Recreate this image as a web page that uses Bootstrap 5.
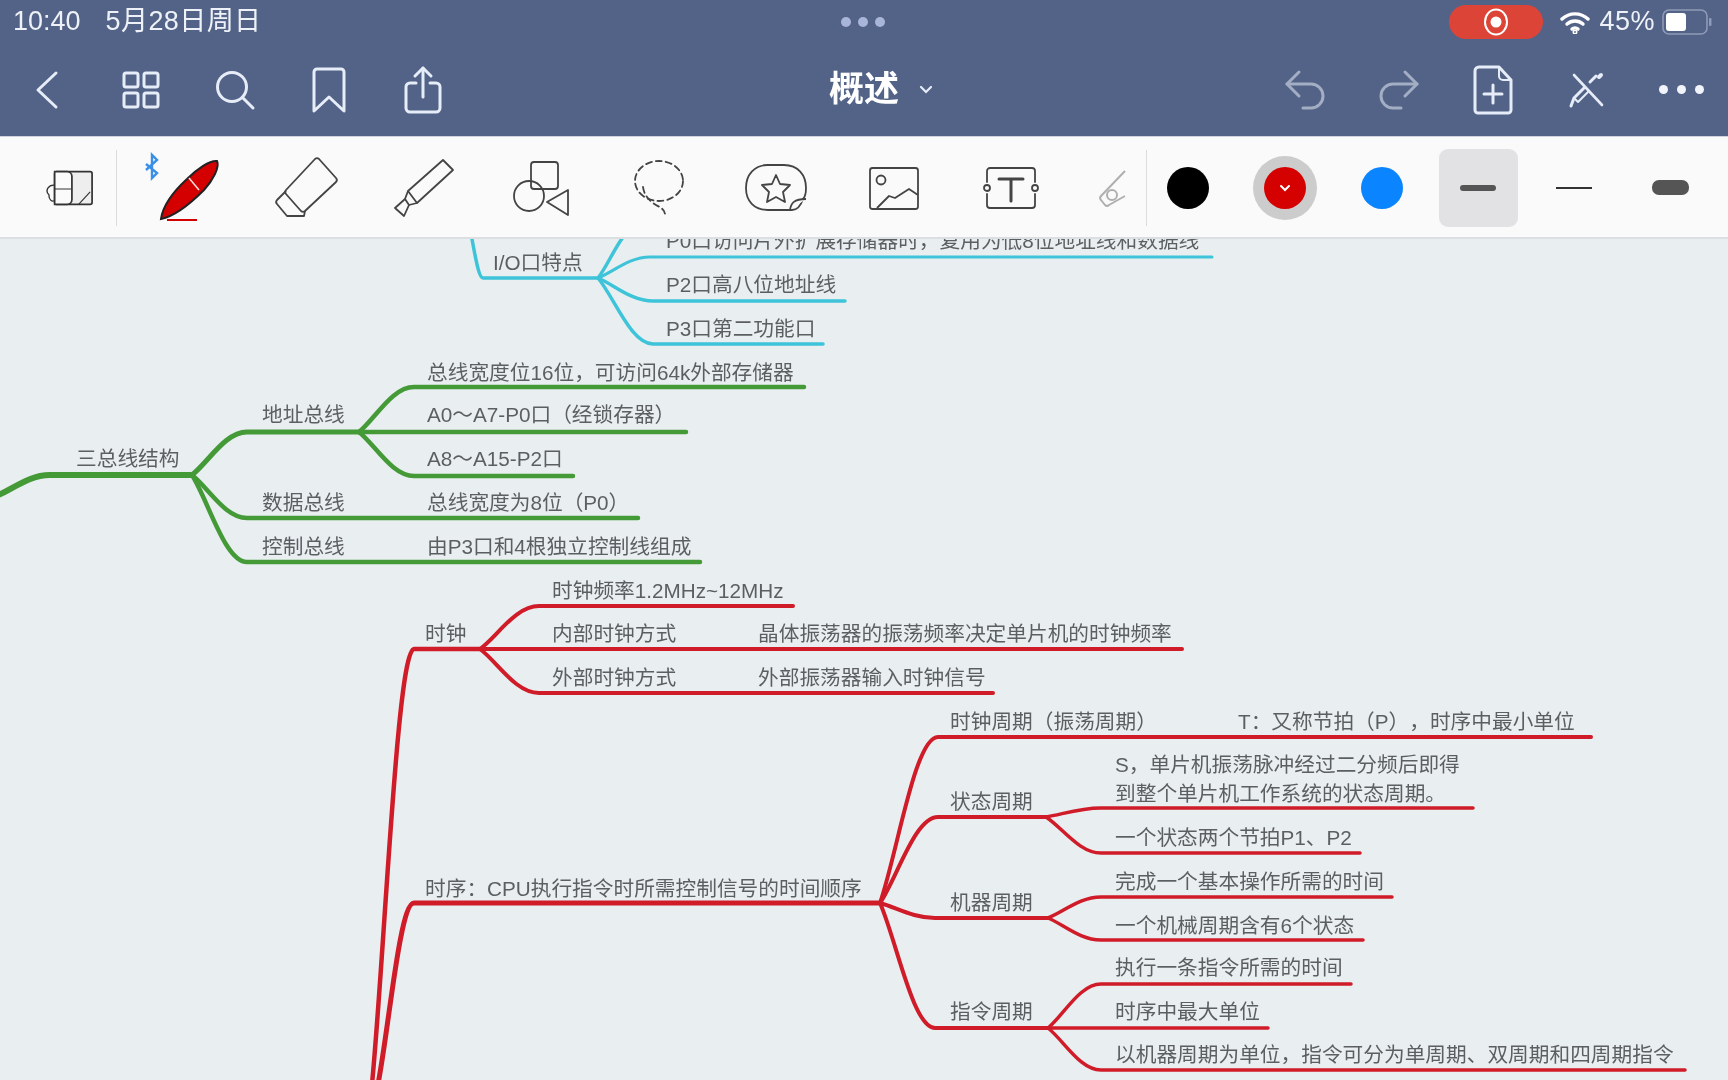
<!DOCTYPE html>
<html lang="zh-CN">
<head>
  <meta charset="UTF-8">
  <meta name="viewport" content="width=device-width, initial-scale=1.0">
  <title>概述</title>
  <link rel="stylesheet" href="https://cdn.jsdelivr.net/npm/bootstrap@5.3.3/dist/css/bootstrap.min.css">
  <style>
    html, body { height: 1080px; overflow: hidden; }
    body { font-family: "Liberation Sans", "Noto Sans CJK SC", sans-serif; background: #e9eef1; }
    .top-head { height: 136px; background: #536387; color: #eef2f8; filter: blur(.5px); }
    .status-row { height: 43px; padding-left: 13px; padding-right: 16px; font-size: 27px; }
    .status-date { margin-left: 25px; letter-spacing: .4px; }
    .status-dots { gap: 7px; margin-left: 580px; }
    .status-dots i { width: 10px; height: 10px; border-radius: 50%; background: #a9b6d9; display: block; }
    .rec-pill { width: 94px; height: 34px; border-radius: 17px; background: #dd4438; margin-right: 17px; }
    .pct { margin-left: 9px; margin-right: 7px; letter-spacing: .5px; }
    .nav-row { height: 93px; }
    .nav-btn { width: 94px; height: 93px; }
    .nav-btn svg, .tool-box svg { fill: none; overflow: visible; }
    .ico { stroke: #e6edf8; stroke-width: 3; stroke-linecap: round; stroke-linejoin: round; }
    .ico-dim { stroke: #a3adc4; }
    .doc-title { font-size: 35px; font-weight: 700; color: #fff; padding-left: 34px; gap: 20px; }
    .more-dots { gap: 9px; }
    .more-dots i { width: 9px; height: 9px; border-radius: 50%; background: #f1f4fa; display: block; }

    .tool-bar { height: 103px; padding-top: 1px; background: #fafafa; border-top: 1px solid #cfd2dc; border-bottom: 2px solid #dcdfe2; filter: blur(.4px); }
    .first-tool { width: 116px; padding-left: 24px; }
    .tool-sep { width: 1px; height: 76px; background: #dcdcdc; }
    .tool-list { width: 1000px; margin-left: 13px; }
    .tool-box { width: 117.5px; height: 96px; }
    .tool-box.tag-cut { width: 56px; justify-content: flex-end !important; opacity: .45; }
    .swatch-box { width: 97px; height: 96px; }
    .swatch-row { margin-left: -8px; margin-right: 10px; }
    .swatch { width: 42px; height: 42px; border-radius: 50%; }
    .swatch-ring { width: 64px; height: 64px; border-radius: 50%; background: #cccccd; }
    .swatch-black { background: #000; }
    .swatch-red { background: #d50000; }
    .swatch-blue { background: #0a84ff; }
    .width-box { width: 96px; height: 96px; }
    .width-on { width: 79px; height: 78px; background: #e2e2e4; border-radius: 9px; }
    .w-mid { width: 36px; height: 6px; border-radius: 3px; background: #555; }
    .w-thin { width: 36px; height: 2px; background: #333; }
    .w-thick { width: 37px; height: 15px; border-radius: 7px; background: #555; }

    .map-canvas { height: 841px; background: #e9eef1; overflow: hidden; filter: blur(.6px); }
    .map-canvas svg { display: block; }
    .map-label { position: absolute; transform: translateY(-50%); white-space: nowrap; color: #5c5f62; font-size: 20.7px; line-height: 1; }
  </style>
</head>
<body>
  <div class="top-head">
    <div class="status-row d-flex align-items-center">
      <span>10:40</span>
      <span class="status-date">5月28日周日</span>
      <div class="status-dots d-flex"><i></i><i></i><i></i></div>
      <div class="rec-pill d-flex align-items-center justify-content-center ms-auto">
        <svg width="26" height="28" viewBox="0 0 26 28"><ellipse cx="13" cy="14" rx="11" ry="12.5" fill="none" stroke="#fff" stroke-width="2"/><circle cx="13" cy="14" r="5.5" fill="#fff"/></svg>
      </div>
      <svg width="30" height="24" viewBox="0 0 30 24" fill="none" stroke="#fff" stroke-width="3.4" stroke-linecap="round"><path d="M2 9a19 19 0 0 1 26 0"/><path d="M7 14a12 12 0 0 1 16 0"/><path d="M12 19a4.5 4.5 0 0 1 6 0"/><circle cx="15" cy="22" r=".8"/></svg>
      <span class="pct">45%</span>
      <svg width="50" height="26" viewBox="0 0 50 26"><rect x="1" y="1" width="44" height="24" rx="6" fill="none" stroke="#8e9ab6" stroke-width="1.6"/><rect x="4" y="4" width="20" height="18" rx="3" fill="#fff"/><rect x="47" y="9" width="2.5" height="8" rx="1" fill="#8e9ab6"/></svg>
    </div>
    <div class="nav-row d-flex align-items-center">
      <div class="d-flex">
        <div class="nav-btn d-flex align-items-center justify-content-center">
          <svg class="ico" width="24" height="40" viewBox="0 0 24 40"><path d="M21 3 3 20l18 17"/></svg>
        </div>
        <div class="nav-btn d-flex align-items-center justify-content-center">
          <svg class="ico" width="38" height="38" viewBox="0 0 38 38"><rect x="2" y="2" width="14" height="14" rx="2"/><rect x="22" y="2" width="14" height="14" rx="2"/><rect x="2" y="22" width="14" height="14" rx="2"/><rect x="22" y="22" width="14" height="14" rx="2"/></svg>
        </div>
        <div class="nav-btn d-flex align-items-center justify-content-center">
          <svg class="ico" width="40" height="40" viewBox="0 0 40 40"><circle cx="17" cy="17" r="14.5"/><path d="M27.5 27.5 38 38"/></svg>
        </div>
        <div class="nav-btn d-flex align-items-center justify-content-center">
          <svg class="ico" width="34" height="46" viewBox="0 0 34 46"><path d="M2 44V5a3 3 0 0 1 3-3h24a3 3 0 0 1 3 3v39L17 30z"/></svg>
        </div>
        <div class="nav-btn d-flex align-items-center justify-content-center">
          <svg class="ico" width="38" height="48" viewBox="0 0 38 48"><path d="M12 17H6a4 4 0 0 0-4 4v21a4 4 0 0 0 4 4h26a4 4 0 0 0 4-4V21a4 4 0 0 0-4-4h-6"/><path d="M19 31V2"/><path d="M11 10l8-8 8 8"/></svg>
        </div>
      </div>
      <div class="flex-fill d-flex justify-content-center">
        <div class="doc-title d-flex align-items-center">
          <span>概述</span>
          <svg width="14" height="9" viewBox="0 0 14 9" fill="none" stroke="#e6edf8" stroke-width="2.2" stroke-linecap="round"><path d="M2 2l5 5 5-5"/></svg>
        </div>
      </div>
      <div class="d-flex">
        <div class="nav-btn d-flex align-items-center justify-content-center">
          <svg class="ico ico-dim" width="42" height="42" viewBox="0 0 42 42"><path d="M15 3 3 15l12 12"/><path d="M3 15h24a12 12 0 0 1 0 24h-8"/></svg>
        </div>
        <div class="nav-btn d-flex align-items-center justify-content-center">
          <svg class="ico ico-dim" width="42" height="42" viewBox="0 0 42 42"><path d="M27 3l12 12-12 12"/><path d="M39 15H15a12 12 0 0 0 0 24h8"/></svg>
        </div>
        <div class="nav-btn d-flex align-items-center justify-content-center">
          <svg class="ico" width="40" height="50" viewBox="0 0 40 50"><path d="M6 2h20l12 13v30a3 3 0 0 1-3 3H5a3 3 0 0 1-3-3V6a4 4 0 0 1 4-4z"/><path d="M26 2v9a4 4 0 0 0 4 4h8" stroke-width="2"/><path d="M20 20v18M11 29h18"/></svg>
        </div>
        <div class="nav-btn d-flex align-items-center justify-content-center">
          <svg class="ico" width="36" height="36" viewBox="0 0 36 36"><path d="M5 3l28 30" stroke-width="2.6"/><path d="M2 34l3-8L15 16M21 10l6-6" stroke-width="3"/><path d="M5 26l4 4L20 19" stroke-width="2"/><path d="M30 5l2-2" stroke-width="4"/></svg>
        </div>
        <div class="nav-btn d-flex align-items-center justify-content-center">
          <div class="more-dots d-flex"><i></i><i></i><i></i></div>
        </div>
      </div>
    </div>
  </div>

  <div class="tool-bar d-flex align-items-center">
    <div class="first-tool d-flex justify-content-center">
      <svg width="48" height="38" viewBox="0 0 50 38" fill="none" stroke="#333" stroke-width="1.8"><rect x="9" y="2" width="39" height="34" rx="2" fill="#eee"/><path d="M9 2h13a5 5 0 0 1 5 5v24a5 5 0 0 1-5 5H9z" fill="#fbfbfb"/><path d="M9 20h17M34 36l12-13" stroke-width="1.2"/><path d="M9 16a7 6 0 0 0-6 10c0 5 3 8 6 6" stroke-width="1.4"/></svg>
    </div>
    <div class="tool-sep"></div>
    <div class="tool-list d-flex align-items-center">
      <div class="tool-box d-flex align-items-center justify-content-center">
        <svg width="64" height="68" viewBox="0 0 64 68">
          <path d="M-11 10l11 9-5 5V1l5 5-11 10" stroke="#3a90e8" stroke-width="2.4"/>
          <path d="M4 65C6 50 17 37 30 25 40 15 53 6 60 7c3 6-4 19-13 29C35 48 19 62 4 65z" fill="#d40000" stroke="#222" stroke-width="2"/>
          <path d="M32 24l10 12" stroke="#f4dcdc" stroke-width="1.6"/>
          <path d="M10 66h30" stroke="#d40000" stroke-width="2"/>
        </svg>
      </div>
      <div class="tool-box d-flex align-items-center justify-content-center">
        <svg width="64" height="62" viewBox="0 0 64 62" stroke="#444" stroke-width="1.8" stroke-linejoin="round"><path d="M41 2a3 3 0 0 1 4 0l17 19a3 3 0 0 1 0 4L31 54a3 3 0 0 1-4 0L12 37a3 3 0 0 1 0-4z"/><path d="M12 34 3 43a3 3 0 0 0 0 4l10 12h17l1-5"/></svg>
      </div>
      <div class="tool-box d-flex align-items-center justify-content-center">
        <svg width="62" height="60" viewBox="0 0 62 60" stroke="#444" stroke-width="1.8" stroke-linejoin="round"><path d="M50 2l10 10-36 33-9-12z"/><path d="M15 33l-3 8 4 6 8-2"/><path d="M12 41 2 50l9 8 5-11"/></svg>
      </div>
      <div class="tool-box d-flex align-items-center justify-content-center">
        <svg width="58" height="58" viewBox="0 0 58 58" stroke="#444" stroke-width="1.8" stroke-linejoin="round"><rect x="19" y="3" width="27" height="27" rx="3"/><circle cx="17" cy="37" r="15"/><path d="M56 31 35 43l21 13z"/></svg>
      </div>
      <div class="tool-box d-flex align-items-center justify-content-center">
        <svg width="52" height="58" viewBox="0 0 52 58" stroke="#444" stroke-width="1.8" stroke-linecap="round" stroke-dasharray="6 4"><ellipse cx="26" cy="22" rx="24" ry="20"/><path d="M10 28c2 14 14 18 18 21 3 2 4 4 4 7"/></svg>
      </div>
      <div class="tool-box d-flex align-items-center justify-content-center">
        <svg width="64" height="50" viewBox="0 0 64 50" stroke="#444" stroke-width="1.8" stroke-linejoin="round"><path d="M46 47H24C10 47 2 38 2 25S10 2 24 2h16c14 0 22 10 22 23 0 5-1 9-3 11-2 6-6 11-11 11z"/><path d="M46 47c1-7 4-11 16-11" fill="#fafafa"/><path d="M32 12l4 9 10 1-7 7 2 10-9-5-9 5 2-10-7-7 10-1z"/></svg>
      </div>
      <div class="tool-box d-flex align-items-center justify-content-center">
        <svg width="52" height="44" viewBox="0 0 52 44" stroke="#444" stroke-width="1.8" stroke-linejoin="round"><rect x="2" y="2" width="48" height="41" rx="2.5"/><circle cx="13" cy="14" r="4.5"/><path d="M9 42l12-12 6 2 14-9 9 6"/></svg>
      </div>
      <div class="tool-box d-flex align-items-center justify-content-center">
        <svg width="56" height="44" viewBox="0 0 56 44" stroke="#444" stroke-width="1.8" stroke-linecap="round"><path d="M4 16V5a3 3 0 0 1 3-3h42a3 3 0 0 1 3 3v11M4 28v11a3 3 0 0 0 3 3h42a3 3 0 0 0 3-3V28"/><circle cx="4" cy="22" r="3"/><circle cx="52" cy="22" r="3"/><path d="M16 13h24M28 13v22" stroke-width="3"/></svg>
      </div>
      <div class="tool-box tag-cut d-flex align-items-center">
        <svg width="28" height="38" viewBox="0 0 28 38" stroke="#555" stroke-width="2" stroke-linejoin="round"><path d="M27 2 3 27a3 3 0 0 0 0 4l4 5a3 3 0 0 0 4 0l16-9"/><circle cx="14" cy="26" r="5"/></svg>
      </div>
    </div>
    <div class="tool-sep ms-auto"></div>
    <div class="swatch-row d-flex align-items-center">
      <div class="swatch-box d-flex align-items-center justify-content-center"><div class="swatch swatch-black"></div></div>
      <div class="swatch-box d-flex align-items-center justify-content-center">
        <div class="swatch-ring d-flex align-items-center justify-content-center">
          <div class="swatch swatch-red d-flex align-items-center justify-content-center">
            <svg width="12" height="8" viewBox="0 0 12 8" fill="none" stroke="#fff" stroke-width="2" stroke-linecap="round"><path d="M2 2l4 4 4-4"/></svg>
          </div>
        </div>
      </div>
      <div class="swatch-box d-flex align-items-center justify-content-center"><div class="swatch swatch-blue"></div></div>
      <div class="width-box d-flex align-items-center justify-content-center"><div class="width-on d-flex align-items-center justify-content-center"><div class="w-mid"></div></div></div>
      <div class="width-box d-flex align-items-center justify-content-center"><div class="w-thin"></div></div>
      <div class="width-box d-flex align-items-center justify-content-center"><div class="w-thick"></div></div>
    </div>
  </div>

  <div class="map-canvas position-relative" id="map"></div>

  <script src="https://cdn.jsdelivr.net/npm/bootstrap@5.3.3/dist/js/bootstrap.bundle.min.js"></script>
  <script>
    const OFFSET_Y = 239;
    const CYAN = '#3ec4d9', GREEN = '#459a38', RED = '#cf1c28';

    // [x0, y0, x1, y1, xEnd, width, colour]: curve to (x1,y1), then a straight run to xEnd
    const links = [
      [469, 225, 483, 278, 598, 3.5, CYAN],
      [598, 278, 640, 225, 640, 3.5, CYAN],
      [598, 278, 650, 257, 1212, 3, CYAN],
      [598, 278, 653, 301, 845, 3.5, CYAN],
      [598, 278, 653, 344, 823, 3.5, CYAN],

      [-4, 496, 50, 475, 192, 6, GREEN],
      [192, 475, 247, 432, 359, 5, GREEN],
      [359, 432, 414, 387, 804, 4.5, GREEN],
      [359, 432, 414, 432, 686, 4.5, GREEN],
      [359, 432, 414, 476, 573, 4.5, GREEN],
      [192, 475, 247, 518, 638, 4.5, GREEN],
      [192, 475, 247, 562, 700, 4.5, GREEN],

      [372, 1084, 414, 649, 480, 4.5, RED],
      [378, 1084, 414, 903, 880, 5, RED],
      [480, 649, 539, 606, 793, 4, RED],
      [480, 649, 539, 649, 1182, 4, RED],
      [480, 649, 539, 693, 993, 4, RED],
      [880, 903, 938, 737, 1591, 4, RED],
      [880, 903, 938, 817, 1046, 4, RED],
      [880, 903, 935, 918, 1048, 4, RED],
      [880, 903, 935, 1028, 1048, 4, RED],
      [1046, 817, 1101, 808, 1473, 3.5, RED],
      [1046, 817, 1101, 853, 1360, 3.5, RED],
      [1048, 918, 1101, 897, 1392, 3.5, RED],
      [1048, 918, 1101, 940, 1363, 3.5, RED],
      [1048, 1028, 1101, 984, 1351, 3.5, RED],
      [1048, 1028, 1101, 1028, 1268, 3.5, RED],
      [1048, 1028, 1101, 1070, 1685, 3.5, RED]
    ];

    // [x, centre y, text]
    const labels = [
      [666, 241, 'P0口访问片外扩展存储器时，复用为低8位地址线和数据线'],
      [493, 263, 'I/O口特点'],
      [666, 285, 'P2口高八位地址线'],
      [666, 329, 'P3口第二功能口'],
      [427, 373, '总线宽度位16位，可访问64k外部存储器'],
      [262, 415, '地址总线'],
      [427, 415, 'A0～A7-P0口（经锁存器）'],
      [76, 459, '三总线结构'],
      [427, 459, 'A8～A15-P2口'],
      [262, 503, '数据总线'],
      [427, 503, '总线宽度为8位（P0）'],
      [262, 547, '控制总线'],
      [427, 547, '由P3口和4根独立控制线组成'],
      [552, 591, '时钟频率1.2MHz~12MHz'],
      [425, 634, '时钟'],
      [552, 634, '内部时钟方式'],
      [758, 634, '晶体振荡器的振荡频率决定单片机的时钟频率'],
      [552, 678, '外部时钟方式'],
      [758, 678, '外部振荡器输入时钟信号'],
      [950, 722, '时钟周期（振荡周期）'],
      [1238, 722, 'T：又称节拍（P）\u200b，时序中最小单位'],
      [1115, 765, 'S，单片机振荡脉冲经过二分频后即得'],
      [1115, 794, '到整个单片机工作系统的状态周期。'],
      [950, 802, '状态周期'],
      [1115, 838, '一个状态两个节拍P1、P2'],
      [1115, 882, '完成一个基本操作所需的时间'],
      [425, 889, '时序：CPU执行指令时所需控制信号的时间顺序'],
      [950, 903, '机器周期'],
      [1115, 926, '一个机械周期含有6个状态'],
      [1115, 968, '执行一条指令所需的时间'],
      [950, 1012, '指令周期'],
      [1115, 1012, '时序中最大单位'],
      [1115, 1055, '以机器周期为单位，指令可分为单周期、双周期和四周期指令']
    ];

    function linkPath(l) {
      const [x0, y0, x1, y1, xEnd] = l;
      const dx = x1 - x0, dy = y1 - y0;
      return `M${x0} ${y0}C${x0 + dx * 0.3} ${y0 + dy * 0.3} ${x0 + dx * 0.6} ${y1} ${x1} ${y1}H${xEnd}`;
    }

    const map = document.getElementById('map');
    let svg = `<svg width="1728" height="841" viewBox="0 ${OFFSET_Y} 1728 841" fill="none" stroke-linecap="round">`;
    links.forEach(l => {
      svg += `<path d="${linkPath(l)}" stroke="${l[6]}" stroke-width="${l[5]}"/>`;
    });
    svg += '</svg>';
    labels.forEach(t => {
      svg += `<span class="map-label" style="left:${t[0]}px;top:${t[1] - OFFSET_Y}px">${t[2]}</span>`;
    });
    map.innerHTML = svg;
  </script>
</body>
</html>
